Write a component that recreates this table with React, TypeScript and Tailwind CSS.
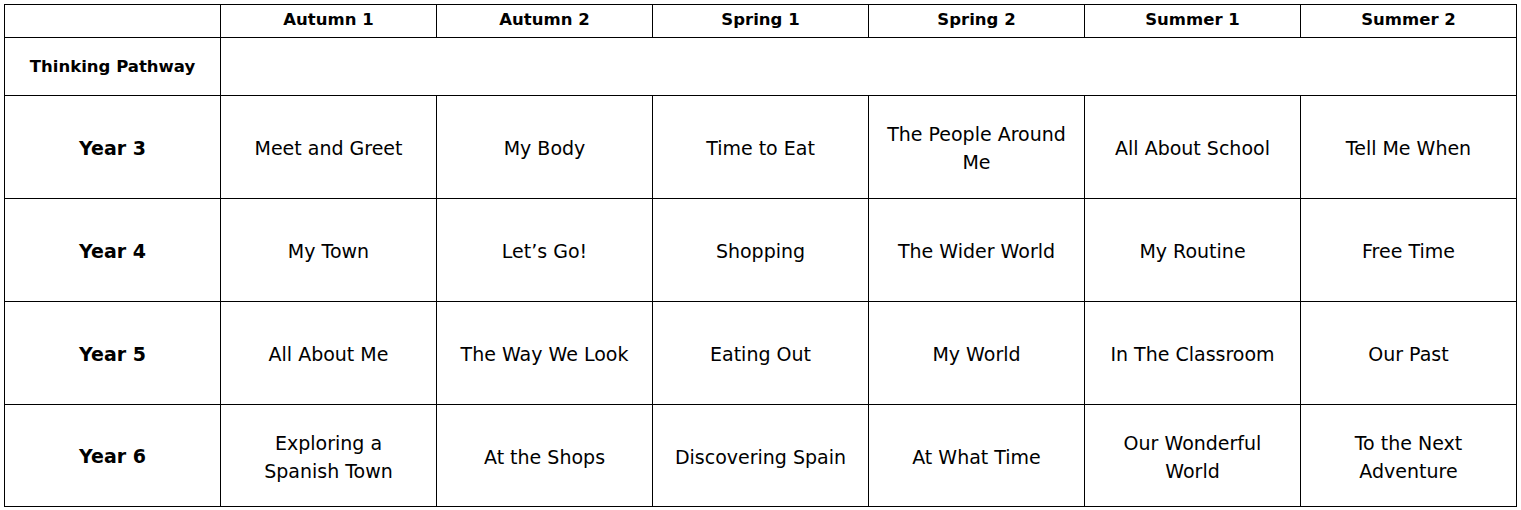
import React from "react";

const terms = ["Autumn 1", "Autumn 2", "Spring 1", "Spring 2", "Summer 1", "Summer 2"];

// each topic is a list of lines, so wraps stay the same as the original sheet
const years: { label: string; topics: string[][] }[] = [
  {
    label: "Year 3",
    topics: [["Meet and Greet"], ["My Body"], ["Time to Eat"], ["The People Around", "Me"], ["All About School"], ["Tell Me When"]],
  },
  {
    label: "Year 4",
    topics: [["My Town"], ["Let\u2019s Go!"], ["Shopping"], ["The Wider World"], ["My Routine"], ["Free Time"]],
  },
  {
    label: "Year 5",
    topics: [["All About Me"], ["The Way We Look"], ["Eating Out"], ["My World"], ["In The Classroom"], ["Our Past"]],
  },
  {
    label: "Year 6",
    topics: [
      ["Exploring a", "Spanish Town"],
      ["At the Shops"],
      ["Discovering Spain"],
      ["At What Time"],
      ["Our Wonderful", "World"],
      ["To the Next", "Adventure"],
    ],
  },
];

const cell = "border border-black text-center align-middle p-0 whitespace-nowrap";

export default function App() {
  return (
    <div
      className="bg-white w-[1521px] h-[510px] pt-1 pl-1 text-black"
      style={{ fontFamily: '"Comic Sans MS", "DejaVu Sans", sans-serif' }}
    >
      <table className="border-collapse table-fixed w-[1512px]">
        <colgroup>
          {Array.from({ length: 7 }).map((_, i) => (
            <col key={i} className="w-[216px]" />
          ))}
        </colgroup>
        <tbody>
          <tr className="h-[33px]">
            <td className={cell}></td>
            {terms.map((t) => (
              <td key={t} className={`${cell} font-bold text-[16.5px] leading-none pb-[2px]`}>
                {t}
              </td>
            ))}
          </tr>
          <tr className="h-[58px]">
            <td className={`${cell} font-bold text-[16.5px] pt-[2px]`}>Thinking Pathway</td>
            <td className={cell} colSpan={6}></td>
          </tr>
          {years.map((y, r) => (
            <tr key={y.label} className={r === 3 ? "h-[102px]" : "h-[103px]"}>
              <td className={`${cell} font-bold text-[19px] pt-[2px]`}>{y.label}</td>
              {y.topics.map((lines, i) => (
                <td key={i} className={`${cell} text-[19px] leading-[28px] pt-[2px]`}>
                  {lines.map((l, j) => (
                    <div key={j}>{l}</div>
                  ))}
                </td>
              ))}
            </tr>
          ))}
        </tbody>
      </table>
    </div>
  );
}
